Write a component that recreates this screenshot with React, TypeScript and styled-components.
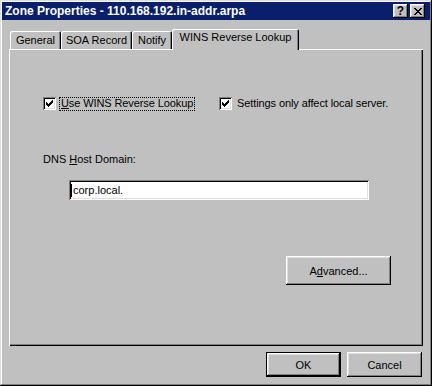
import React from 'react';
import styled, { createGlobalStyle } from 'styled-components';

const GlobalStyle = createGlobalStyle`
  html, body {
    margin: 0;
    padding: 0;
    background: #c0c0c0;
  }
  body {
    font-family: "Liberation Sans", Arial, sans-serif;
    font-size: 11px;
    color: #000;
  }
`;

const raised = `
  box-shadow: inset -1px -1px #000, inset 1px 1px #fff, inset -2px -2px #808080, inset 2px 2px #dfdfdf;
`;

const sunken = `
  box-shadow: inset 1px 1px #808080, inset -1px -1px #fff, inset 2px 2px #000, inset -2px -2px #dfdfdf;
`;

const Window = styled.div`
  box-sizing: border-box;
  width: 432px;
  height: 386px;
  padding: 2px;
  display: flex;
  flex-direction: column;
  background: #c0c0c0;
  box-shadow: inset -1px -1px #000, inset 1px 1px #dfdfdf, inset -2px -2px #808080, inset 2px 2px #fff;
`;

const TitleBar = styled.div`
  height: 18px;
  display: flex;
  align-items: center;
  padding: 0 5px 0 3px;
  background: #0a1f6c;
  color: #fff;
`;

const TitleText = styled.div`
  flex: 1;
  font-weight: bold;
  font-size: 12px;
  white-space: nowrap;
`;

const CaptionButtons = styled.div`
  display: flex;
  gap: 2px;
`;

const CaptionButton = styled.div`
  width: 15px;
  height: 14px;
  display: flex;
  align-items: center;
  justify-content: center;
  background: #c0c0c0;
  color: #000;
  font-weight: bold;
  font-size: 12px;
  line-height: 14px;
  ${raised}
`;

const Body = styled.div`
  flex: 1;
  display: flex;
  flex-direction: column;
  padding: 9px 7px 0 7px;
`;

const TabStrip = styled.div`
  height: 20px;
  display: flex;
  align-items: flex-end;
  padding-left: 1px;
  position: relative;
  z-index: 1;
`;

const Tab = styled.div<{ $active?: boolean; $w: number }>`
  box-sizing: border-box;
  width: ${(p) => p.$w}px;
  height: ${(p) => (p.$active ? 21 : 18)}px;
  margin-bottom: ${(p) => (p.$active ? -1 : 0)}px;
  padding-top: ${(p) => (p.$active ? 2 : 3)}px;
  text-align: center;
  line-height: 13px;
  white-space: nowrap;
  background: #c0c0c0;
  border-radius: 2px 2px 0 0;
  box-shadow: inset 1px 1px #fff, inset -1px 0 #000, inset -2px 0 #808080;
`;

const Panel = styled.div`
  flex: 1;
  display: flex;
  flex-direction: column;
  padding: 48px 32px 0 34px;
  box-shadow: inset 1px 1px #fff, inset -1px -1px #000, inset -2px -2px #808080;
`;

const CheckRow = styled.div`
  display: grid;
  grid-template-columns: 176px auto;
  align-items: center;
`;

const CheckItem = styled.div`
  display: flex;
  align-items: center;
  gap: 4px;
`;

const CheckBox = styled.div`
  width: 13px;
  height: 13px;
  display: flex;
  align-items: center;
  justify-content: center;
  background: #fff;
  ${sunken}
`;

const CheckLabel = styled.span<{ $focus?: boolean }>`
  line-height: 11px;
  padding: 0 1px 1px;
  white-space: nowrap;
  letter-spacing: -0.1px;
  outline: ${(p) => (p.$focus ? '1px dotted #000' : 'none')};
`;

const Accel = styled.span`
  text-decoration: underline;
`;

const FieldLabel = styled.div`
  margin-top: 43px;
  line-height: 13px;
`;

const TextBox = styled.div`
  box-sizing: border-box;
  margin: 14px 0 0 26px;
  width: 300px;
  height: 20px;
  display: flex;
  align-items: center;
  padding-left: 2px;
  background: #fff;
  ${sunken}
`;

const Caret = styled.span`
  width: 1px;
  height: 13px;
  margin-right: 1px;
  background: #000;
`;

const AdvancedRow = styled.div`
  margin-top: 56px;
  display: flex;
  justify-content: flex-end;
`;

const Button = styled.div<{ $default?: boolean; $w: number; $h: number }>`
  box-sizing: border-box;
  width: ${(p) => p.$w}px;
  height: ${(p) => p.$h}px;
  display: flex;
  align-items: center;
  justify-content: center;
  background: #c0c0c0;
  border: ${(p) => (p.$default ? '1px solid #000' : 'none')};
  ${raised}
`;

const Footer = styled.div`
  display: flex;
  justify-content: flex-end;
  gap: 6px;
  padding: 6px 1px 7px 0;
`;

function CheckMark() {
  return (
    <svg width="7" height="7" viewBox="0 0 7 7" shapeRendering="crispEdges">
      <path
        fill="#000"
        d="M6 0h1v1h-1zM5 1h2v1h-2zM0 2h1v1h-1zM4 2h3v1h-3zM0 3h2v1h-2zM3 3h3v1h-3zM0 4h5v1h-5zM1 5h3v1h-3zM2 6h1v1h-1z"
      />
    </svg>
  );
}

function CloseGlyph() {
  return (
    <svg width="8" height="7" viewBox="0 0 8 7" shapeRendering="crispEdges">
      <path
        fill="#000"
        d="M0 0h2v1h-2zM6 0h2v1h-2zM1 1h2v1h-2zM5 1h2v1h-2zM2 2h4v1h-4zM3 3h2v1h-2zM2 4h4v1h-4zM1 5h2v1h-2zM5 5h2v1h-2zM0 6h2v1h-2zM6 6h2v1h-2z"
      />
    </svg>
  );
}

export default function App() {
  return (
    <>
      <GlobalStyle />
      <Window>
        <TitleBar>
          <TitleText>Zone Properties - 110.168.192.in-addr.arpa</TitleText>
          <CaptionButtons>
            <CaptionButton>?</CaptionButton>
            <CaptionButton>
              <CloseGlyph />
            </CaptionButton>
          </CaptionButtons>
        </TitleBar>
        <Body>
          <TabStrip>
            <Tab $w={51}>General</Tab>
            <Tab $w={71}>SOA Record</Tab>
            <Tab $w={40}>Notify</Tab>
            <Tab $w={127} $active>WINS Reverse Lookup</Tab>
          </TabStrip>
          <Panel>
            <CheckRow>
              <CheckItem>
                <CheckBox>
                  <CheckMark />
                </CheckBox>
                <CheckLabel $focus>
                  <Accel>U</Accel>se WINS Reverse Lookup
                </CheckLabel>
              </CheckItem>
              <CheckItem>
                <CheckBox>
                  <CheckMark />
                </CheckBox>
                <CheckLabel>Settings only affect local server.</CheckLabel>
              </CheckItem>
            </CheckRow>
            <FieldLabel>
              DNS <Accel>H</Accel>ost Domain:
            </FieldLabel>
            <TextBox>
              <Caret />
              corp.local.
            </TextBox>
            <AdvancedRow>
              <Button $w={105} $h={29}>
                A<Accel>d</Accel>vanced...
              </Button>
            </AdvancedRow>
          </Panel>
          <Footer>
            <Button $default $w={75} $h={25}>OK</Button>
            <Button $w={75} $h={25}>Cancel</Button>
          </Footer>
        </Body>
      </Window>
    </>
  );
}
